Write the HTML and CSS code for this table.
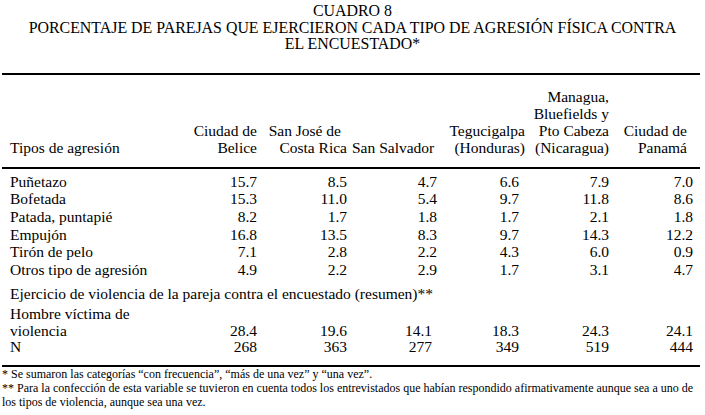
FILE: index.html
```html
<!DOCTYPE html>
<html lang="es">
<head>
<meta charset="utf-8">
<link rel="stylesheet" href="styles.css">
</head>
<body>
<div class="page">
  <div class="title">
    <div>CUADRO 8</div>
    <div>PORCENTAJE DE PAREJAS QUE EJERCIERON CADA TIPO DE AGRESIÓN FÍSICA CONTRA</div>
    <div>EL ENCUESTADO*</div>
  </div>
  <table class="tbl">
    <colgroup>
      <col class="w0"><col class="w1"><col class="w2"><col class="w3"><col class="w4"><col class="w5"><col class="w6">
    </colgroup>
    <thead>
      <tr>
        <th class="lab">Tipos de agresión</th>
        <th class="h1">Ciudad de<br>Belice</th>
        <th class="h2"><span class="sj">San José de</span><br>Costa Rica</th>
        <th class="h3">San Salvador</th>
        <th class="h4">Tegucigalpa<br>(Honduras)</th>
        <th class="h5">Managua,<br>Bluefields y<br>Pto Cabeza<br>(Nicaragua)</th>
        <th class="h6">Ciudad de<br>Panamá</th>
      </tr>
    </thead>
    <tbody>
      <tr class="first"><td class="lab">Puñetazo</td><td class="v1">15.7</td><td class="v2">8.5</td><td class="v3">4.7</td><td class="v4">6.6</td><td class="v5">7.9</td><td class="v6">7.0</td></tr>
      <tr><td class="lab">Bofetada</td><td class="v1">15.3</td><td class="v2">11.0</td><td class="v3">5.4</td><td class="v4">9.7</td><td class="v5">11.8</td><td class="v6">8.6</td></tr>
      <tr><td class="lab">Patada, puntapié</td><td class="v1">8.2</td><td class="v2">1.7</td><td class="v3">1.8</td><td class="v4">1.7</td><td class="v5">2.1</td><td class="v6">1.8</td></tr>
      <tr><td class="lab">Empujón</td><td class="v1">16.8</td><td class="v2">13.5</td><td class="v3">8.3</td><td class="v4">9.7</td><td class="v5">14.3</td><td class="v6">12.2</td></tr>
      <tr><td class="lab">Tirón de pelo</td><td class="v1">7.1</td><td class="v2">2.8</td><td class="v3">2.2</td><td class="v4">4.3</td><td class="v5">6.0</td><td class="v6">0.9</td></tr>
      <tr><td class="lab">Otros tipo de agresión</td><td class="v1">4.9</td><td class="v2">2.2</td><td class="v3">2.9</td><td class="v4">1.7</td><td class="v5">3.1</td><td class="v6">4.7</td></tr>
      <tr class="sec"><td class="secl" colspan="7">Ejercicio de violencia de la pareja contra el encuestado (resumen)**</td></tr>
      <tr class="gap"><td class="lab">Hombre víctima de<br>violencia</td><td class="v1">28.4</td><td class="v2">19.6</td><td class="v3b">14.1</td><td class="v4">18.3</td><td class="v5">24.3</td><td class="v6">24.1</td></tr>
      <tr class="last"><td class="lab">N</td><td class="v1">268</td><td class="v2">363</td><td class="v3b">277</td><td class="v4">349</td><td class="v5">519</td><td class="v6">444</td></tr>
    </tbody>
  </table>
  <div class="notes">
    <p>* Se sumaron las categorías “con frecuencia”, “más de una vez” y “una vez”.</p>
    <p>** Para la confección de esta variable se tuvieron en cuenta todos los entrevistados que habían respondido afirmativamente aunque sea a uno de los tipos de violencia, aunque sea una vez.</p>
  </div>
</div>
</body>
</html>
```

FILE: styles.css
```css
html, body {
  margin: 0;
  padding: 0;
  background: #fff;
}
body {
  font-family: "Liberation Serif", "Times New Roman", serif;
  color: #000;
  font-size: 15.5px;
}
.page {
  width: 705px;
  padding: 3px 2px 0 2px;
  box-sizing: border-box;
}
.title {
  text-align: center;
  font-size: 15.9px;
  line-height: 16.5px;
}
.tbl {
  margin-top: 20px;
  width: 698px;
  table-layout: fixed;
  border-collapse: collapse;
  border-top: 2px solid #000;
  border-bottom: 2px solid #000;
  line-height: 17.7px;
}
.w0 { width: 188px; }
.w1 { width: 72px; }
.w2 { width: 90px; }
.w3 { width: 88px; }
.w4 { width: 90px; }
.w5 { width: 84px; }
.w6 { width: 86px; }
th, td {
  padding: 0;
  font-weight: normal;
  text-align: right;
  white-space: nowrap;
}
thead th {
  vertical-align: bottom;
  padding-top: 13px;
  padding-bottom: 11px;
  border-bottom: 2px solid #000;
  line-height: 17px;
}
.lab { text-align: left; padding-left: 8px; }
.secl { text-align: left; padding-left: 8px; }
.h1, .v1 { padding-right: 5px; }
.h2, .v2 { padding-right: 5px; }
.sj { padding-right: 6px; }
.h3 { padding-right: 8px; }
.v3 { padding-right: 3px; }
.v3b { padding-right: 8px; }
.h4 { padding-right: 5px; }
.v4 { padding-right: 11px; }
.h5 { padding-right: 5px; }
.v5 { padding-right: 5px; }
.h6 { padding-right: 13px; }
.v6 { padding-right: 7px; }
tr.first td { padding-top: 4px; }
tr.sec td { padding-top: 6px; padding-bottom: 3px; }
tr.gap td { vertical-align: bottom; line-height: 17px; }
tr.last td { padding-bottom: 9px; line-height: 16.7px; }
.notes {
  font-size: 12px;
  line-height: 14px;
  padding-top: 0;
}
.notes p { margin: 0; }
```
